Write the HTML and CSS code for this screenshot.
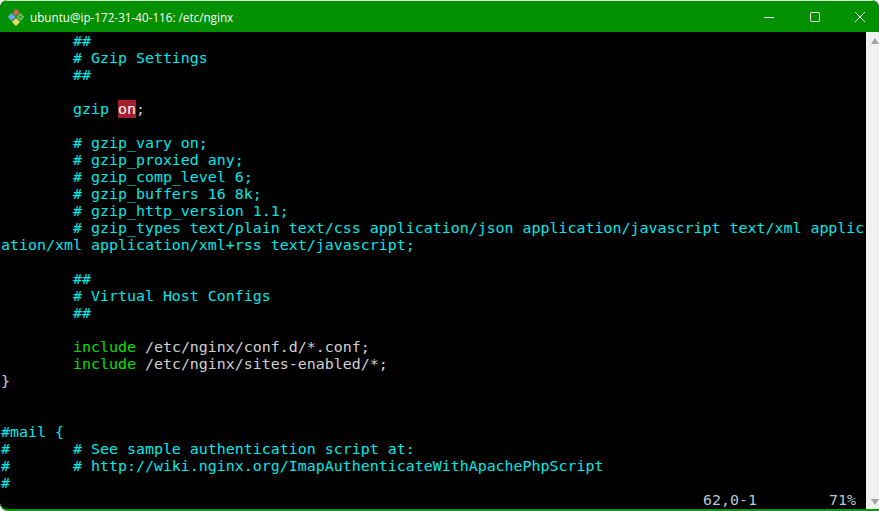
FILE: index.html
```html
<!DOCTYPE html>
<html lang="en">
<head>
<meta charset="utf-8">
<title>ubuntu@ip-172-31-40-116: /etc/nginx</title>
<link rel="stylesheet" href="styles.css">
</head>
<body>
<div class="window">
  <header class="titlebar">
    <svg class="app-icon" viewBox="0 0 18 18" width="18" height="18" aria-hidden="true">
      <path class="i-red" d="M9 .8 12.6 4.4 9 8 6.4 5.4 7 3.4 6.6 3.2Z"/>
      <path class="i-blue" d="M4.6 5 8.6 9 4.6 13 .6 9Z"/>
      <path class="i-green" d="M13.4 5 17.4 9 13.4 13 9.4 9Z"/>
      <path class="i-core" d="M13.4 7.2 15.2 9 13.4 10.8 11.6 9Z"/>
      <path class="i-yellow" d="M9 10 13 14 9 18 5 14Z"/>
    </svg>
    <span class="title">ubuntu@ip-172-31-40-116: /etc/nginx</span>
    <div class="controls">
      <span class="ctl"><svg viewBox="0 0 10 10" width="10" height="10"><path d="M0 5.5H10"/></svg></span>
      <span class="ctl"><svg viewBox="0 0 10 10" width="10" height="10"><rect x=".5" y=".5" width="9" height="9" rx="1"/></svg></span>
      <span class="ctl"><svg viewBox="0 0 10 10" width="10" height="10"><path d="M0 0 10 10M10 0 0 10"/></svg></span>
    </div>
  </header>
  <div class="body">
<pre class="term"><span class="c">        ##
        # Gzip Settings
        ##

</span>        <span class="c">gzip</span> <span class="hl">on</span><span class="w">;</span>
<span class="c">
        # gzip_vary on;
        # gzip_proxied any;
        # gzip_comp_level 6;
        # gzip_buffers 16 8k;
        # gzip_http_version 1.1;
        # gzip_types text/plain text/css application/json application/javascript text/xml applic
ation/xml application/xml+rss text/javascript;

        ##
        # Virtual Host Configs
        ##

</span>        <span class="g">include</span> <span class="w">/etc/nginx/conf.d/*.conf;</span>
        <span class="g">include</span> <span class="w">/etc/nginx/sites-enabled/*;</span>
<span class="w">}</span>


<span class="c">#mail {
#       # See sample authentication script at:
#       # http://wiki.nginx.org/ImapAuthenticateWithApachePhpScript
#</span>
<span class="status"><span class="pos">62,0-1</span><span class="pct">71%</span></span></pre>
    <div class="scrollbar">
      <span class="arrow up"></span>
      <span class="arrow down"></span>
    </div>
  </div>
</div>
</body>
</html>
```
FILE: styles.css
```css
html, body { margin: 0; height: 100%; background: #f0f0f0; overflow: hidden; }
.window {
  width: 879px; height: 511px; box-sizing: border-box;
  display: flex; flex-direction: column;
  background: #000; border-radius: 8px 8px 0 8px;
  border-bottom: 2px solid #0a9a0a; overflow: hidden;
}
.titlebar {
  height: 32px; flex: none; box-sizing: border-box;
  display: flex; align-items: center;
  background: #009000; border-top: 1px solid #cfe8cf;
  padding-left: 7px; color: #fff;
  font: 11.7px "Open Sans", "Liberation Sans", sans-serif;
}
.app-icon { flex: none; margin-right: 5px; }
.i-red { fill: #e0605a; }
.i-blue { fill: #6aa5f2; }
.i-green { fill: #6cc06c; }
.i-core { fill: #2f9a2f; }
.i-yellow { fill: #efd968; }
.title { flex: 1; }
.controls { display: flex; margin-right: -4px; }
.ctl { width: 45.5px; height: 31px; display: flex; align-items: center; justify-content: center; }
.ctl svg { fill: none; stroke: #fff; stroke-width: 1; }
.body { flex: 1; display: flex; min-height: 0; }
.term {
  flex: 1; margin: 0; padding: 1px 0 0 1px;
  font: 14.95px/17px "DejaVu Sans Mono", monospace;
  color: #00e8e8; overflow: hidden; white-space: pre;
}
.c { color: #00e8e8; }
.g { color: #00e000; }
.w { color: #d0d0d0; }
.hl { background: #a5202c; color: #fff; }
.status { display: flex; color: #b4c8dc; padding-left: 702px; }
.pos { width: 126px; }
.scrollbar {
  width: 13px; flex: none; background: #f0f0f0;
  display: flex; flex-direction: column; justify-content: space-between;
  padding: 6px 0 4px; box-sizing: border-box; align-items: flex-end;
}
.arrow { width: 0; height: 0; border-left: 4px solid transparent; border-right: 4px solid transparent; }
.up { border-bottom: 6px solid #a3a3a3; }
.down { border-top: 6px solid #a3a3a3; }
```
